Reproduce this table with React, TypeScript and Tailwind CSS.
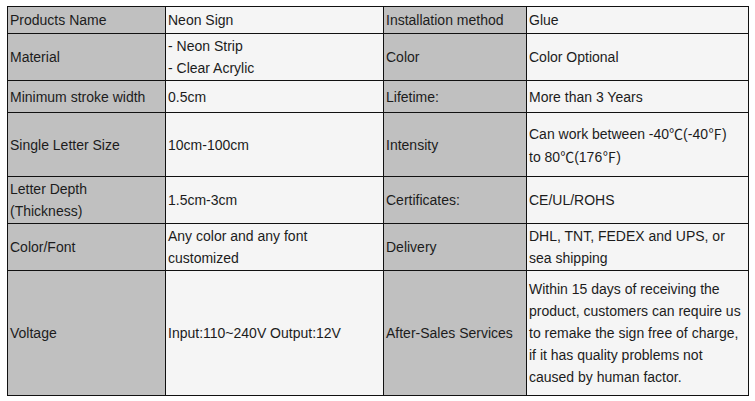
const FONT = "font-['Liberation_Sans','Arial','Noto_Sans_CJK_SC',sans-serif]";

type Cell = { label: string; value: string[] };
type Row = { h: string; left: Cell; right: Cell };

const ROWS: Row[] = [
  {
    h: "h-[26px]",
    left: { label: "Products Name", value: ["Neon Sign"] },
    right: { label: "Installation method", value: ["Glue"] },
  },
  {
    h: "h-[46px]",
    left: { label: "Material", value: ["- Neon Strip", "- Clear Acrylic"] },
    right: { label: "Color", value: ["Color Optional"] },
  },
  {
    h: "h-[31px]",
    left: { label: "Minimum stroke width", value: ["0.5cm"] },
    right: { label: "Lifetime:", value: ["More than 3 Years"] },
  },
  {
    h: "h-[63px]",
    left: { label: "Single Letter Size", value: ["10cm-100cm"] },
    right: {
      label: "Intensity",
      value: ["Can work between -40℃(-40℉)", "to 80℃(176℉)"],
    },
  },
  {
    h: "h-[46px]",
    left: { label: "Letter Depth\n(Thickness)", value: ["1.5cm-3cm"] },
    right: { label: "Certificates:", value: ["CE/UL/ROHS"] },
  },
  {
    h: "h-[46px]",
    left: {
      label: "Color/Font",
      value: ["Any color and any font", "customized"],
    },
    right: {
      label: "Delivery",
      value: ["DHL, TNT, FEDEX and UPS, or", "sea shipping"],
    },
  },
  {
    h: "h-[124px]",
    left: { label: "Voltage", value: ["Input:110~240V Output:12V"] },
    right: {
      label: "After-Sales Services",
      value: [
        "Within 15 days of receiving the",
        "product, customers can require us",
        "to remake the sign free of charge,",
        "if it has quality problems not",
        "caused by human factor.",
      ],
    },
  },
];

// the degree signs come from a CJK font in the original, so they sit full width
function Line({ text }: { text: string }) {
  const parts = text.split(/([℃℉])/);
  return (
    <span className="whitespace-nowrap">
      {parts.map((p, i) =>
        p === "℃" || p === "℉" ? (
          <span key={i} className="font-['Noto_Sans_CJK_SC',sans-serif]">
            {p}
          </span>
        ) : (
          p
        )
      )}
    </span>
  );
}

function Label({ text, h }: { text: string; h: string }) {
  return (
    <div className={`${h} flex flex-col justify-center bg-[#c0c0c0] px-[2px]`}>
      {text.split("\n").map((line) => (
        <Line key={line} text={line} />
      ))}
    </div>
  );
}

function Value({ lines, h }: { lines: string[]; h: string }) {
  return (
    <div className={`${h} flex flex-col justify-center bg-[#f5f5f5] px-[2px]`}>
      {lines.map((line) => (
        <Line key={line} text={line} />
      ))}
    </div>
  );
}

export default function App() {
  return (
    <div className={`min-h-[401px] w-[755px] bg-white pt-[6px] pl-[7px] ${FONT}`}>
      <div className="grid w-[742px] grid-cols-[157px_217px_142px_221px] gap-px bg-[#111] p-px text-[14px] leading-[22px] text-[#1c1c1c]">
        {ROWS.map((row) => (
          <div key={row.left.label} className="contents">
            <Label text={row.left.label} h={row.h} />
            <Value lines={row.left.value} h={row.h} />
            <Label text={row.right.label} h={row.h} />
            <Value lines={row.right.value} h={row.h} />
          </div>
        ))}
      </div>
    </div>
  );
}
